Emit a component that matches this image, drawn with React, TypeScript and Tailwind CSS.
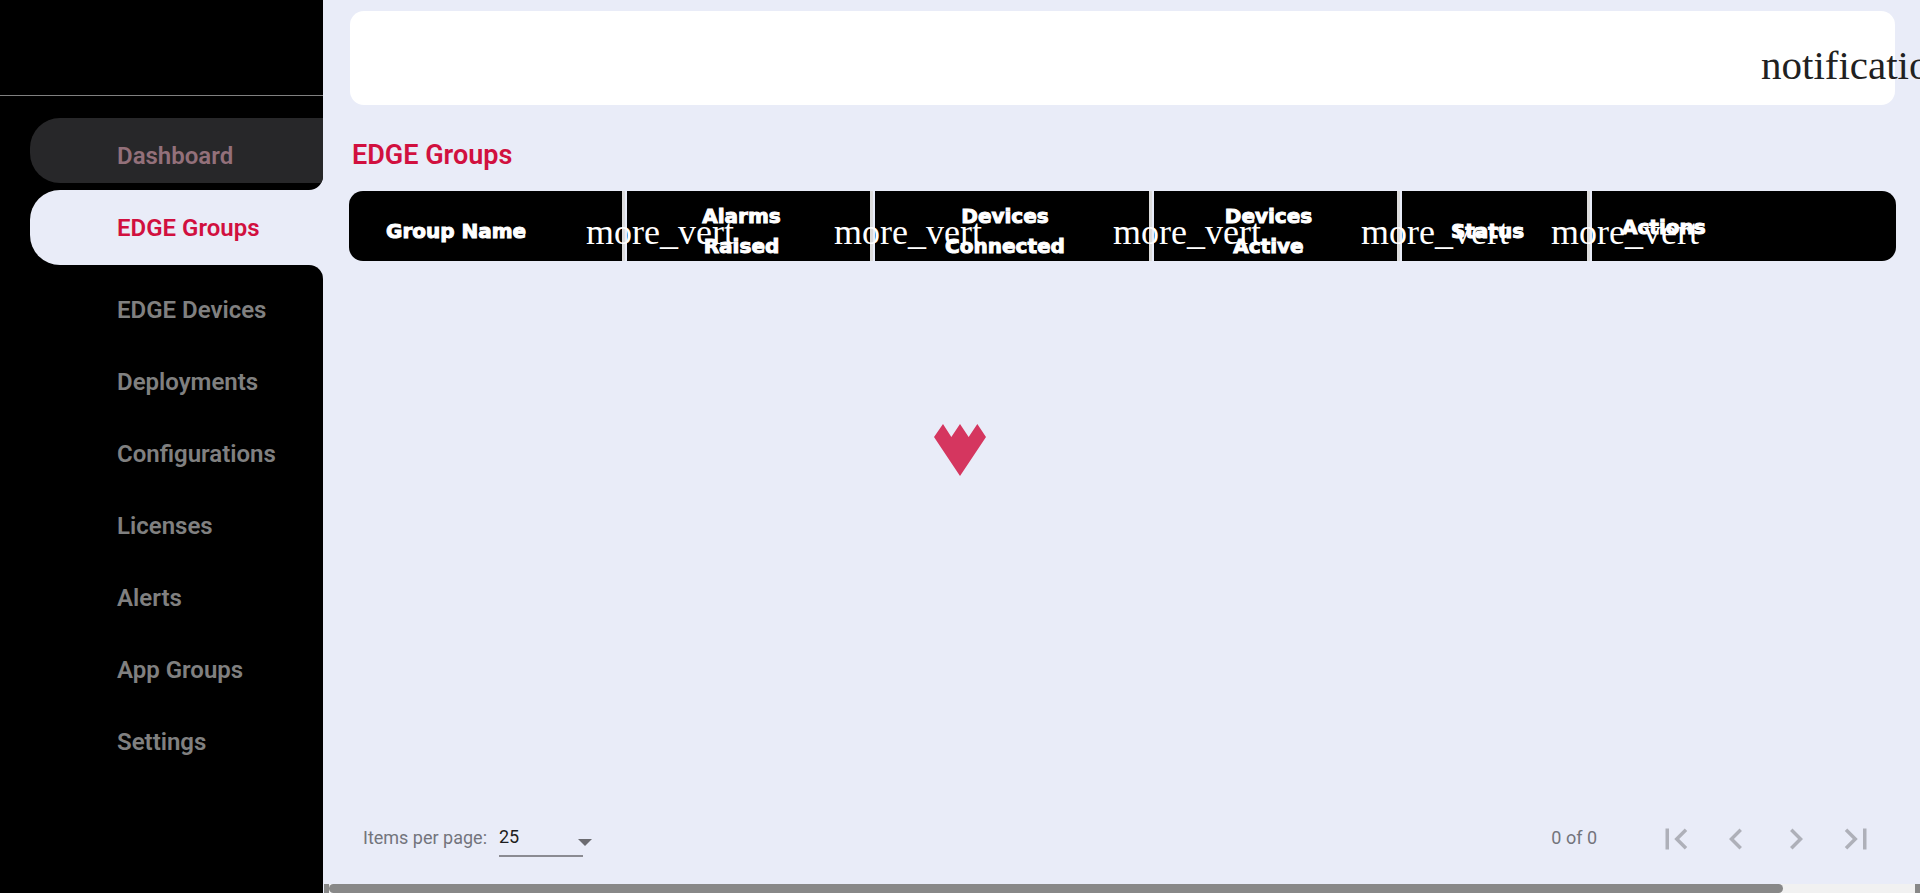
import React from 'react';
import { MdChevronLeft, MdChevronRight, MdFirstPage, MdLastPage } from 'react-icons/md';

const before = ['Dashboard'];
const after = ['EDGE Devices', 'Deployments', 'Configurations', 'Licenses', 'Alerts', 'App Groups', 'Settings'];

function Sidebar() {
  return (
    <aside className="flex w-[323px] shrink-0 flex-col bg-black font-[Roboto,sans-serif] text-2xl font-semibold text-[#808080]">
      <div className="h-24 border-b border-[#808080]" />
      <nav className="mt-[22px] flex flex-col">
        {before.map((label) => (
          <div key={label} className="bg-[#e9ecf8]">
            <div className="overflow-hidden rounded-br-[14px] bg-black pb-[7px]">
              <a href="#" className="ml-[30px] flex h-[65px] items-center rounded-l-[30px] bg-[#272729] pt-[10px] pl-[87px] text-[#93707a]">
                {label}
              </a>
            </div>
          </div>
        ))}
        <div className="bg-black">
          <a href="#" aria-current="page" className="ml-[30px] flex h-[75px] items-center rounded-l-[30px] bg-[#e9ecf8] pl-[87px] text-[#d1103f]">
            EDGE Groups
          </a>
        </div>
        <div className="bg-[#e9ecf8]">
          <div className="flex flex-col rounded-tr-[14px] bg-black pt-[9px]">
            {after.map((label) => (
              <a key={label} href="#" className="flex h-[72px] items-center pl-[117px]">
                {label}
              </a>
            ))}
          </div>
        </div>
      </nav>
    </aside>
  );
}

function HeaderCell({ first, children }: { first?: boolean; children: React.ReactNode }) {
  return (
    <th className={first ? 'rounded-l-[14px] border-r-[3px] border-[#dcdcdc] bg-black p-0' : 'border-r-[3px] border-[#dcdcdc] bg-black p-0'}>
      <div className={first ? 'relative flex h-[70px] items-center pt-[10px] pl-[37px]' : 'relative flex h-[70px] items-center justify-center pt-[10px] pr-[14px]'}>
        <span className="[-webkit-text-stroke:1px_white]">{children}</span>
        <button type="button" className="absolute top-4 right-0 w-9 text-left font-['Liberation_Serif',serif] text-4xl leading-[50px] font-normal whitespace-nowrap text-white">
          more_vert
        </button>
      </div>
    </th>
  );
}

function GroupsTable() {
  return (
    <div className="-mx-[2px]">
      <table className="w-full table-fixed border-separate border-spacing-x-[2px] border-spacing-y-0 font-['DejaVu_Sans',sans-serif] text-xl leading-[30px] font-bold text-white">
        <colgroup>
          <col className="w-[276px]" />
          <col className="w-[246px]" />
          <col className="w-[277px]" />
          <col className="w-[246px]" />
          <col className="w-[188px]" />
          <col />
        </colgroup>
        <thead>
          <tr>
            <HeaderCell first>Group Name</HeaderCell>
            <HeaderCell>Alarms<br />Raised</HeaderCell>
            <HeaderCell>Devices<br />Connected</HeaderCell>
            <HeaderCell>Devices<br />Active</HeaderCell>
            <HeaderCell>Status</HeaderCell>
            <th className="rounded-r-[14px] bg-black pt-[2px] pb-0 pl-[30px] text-left [-webkit-text-stroke:1px_white]">Actions</th>
          </tr>
        </thead>
      </table>
    </div>
  );
}

const pageButton = 'flex h-[60px] w-[60px] items-center justify-center';

function Paginator() {
  return (
    <div className="flex h-[60px] items-center justify-between pr-[10px] pl-[14px] font-[Roboto,sans-serif] text-lg font-normal text-[#73747c]">
      <div className="flex items-center gap-3 pb-[2px]">
        <label htmlFor="page-size">Items per page:</label>
        <div className="relative h-[38px] w-[84px] border-b-2 border-[#8b8b92]">
          <select id="page-size" defaultValue="25" className="h-9 w-full appearance-none bg-transparent text-[#1d1d20]">
            <option>25</option>
            <option>50</option>
            <option>100</option>
          </select>
          <svg viewBox="0 0 14 7" className="pointer-events-none absolute top-5 -right-[9px] h-[7px] w-[14px] fill-[#6b6b70]">
            <path d="M0 0h14L7 7z" />
          </svg>
        </div>
      </div>
      <div className="flex items-center">
        <span className="mr-[49px] pb-[2px]">0 of 0</span>
        <div className="flex text-[42px] text-[#aeb0b9]">
          <button type="button" aria-label="First page" className={pageButton}><MdFirstPage /></button>
          <button type="button" aria-label="Previous page" className={pageButton}><MdChevronLeft /></button>
          <button type="button" aria-label="Next page" className={pageButton}><MdChevronRight /></button>
          <button type="button" aria-label="Last page" className={pageButton}><MdLastPage /></button>
        </div>
      </div>
    </div>
  );
}

export default function App() {
  return (
    <div className="relative flex min-h-screen overflow-hidden bg-[#e9ecf8]">
      <Sidebar />
      <div className="flex min-w-0 flex-1 flex-col">
        <main className="flex flex-1 flex-col pt-[11px] pr-6 pl-[26px]">
          <header className="mx-px flex h-[94px] items-center justify-end rounded-[14px] bg-white pr-[94px]">
            <button type="button" className="mt-[14px] w-10 text-left font-['Liberation_Serif',serif] text-[41px] leading-[60px] whitespace-nowrap text-[#212121]">
              notifications
            </button>
          </header>
          <h1 className="mt-8 mb-[18px] pl-[3px] font-[Roboto,sans-serif] text-[27px] leading-[36px] font-semibold text-[#d1103f]">EDGE Groups</h1>
          <div className="flex-1">
            <GroupsTable />
          </div>
          <Paginator />
          <div className="h-[15px]" />
        </main>
        <div className="ml-px flex h-[9px] justify-between bg-[#f1f1f1]">
          <div className="w-[5px] bg-[#888]" />
          <div className="flex-1">
            <div className="h-full w-11/12 rounded-full bg-[#888]" />
          </div>
          <div className="w-[5px] bg-[#888]" />
        </div>
      </div>
      <div role="status" aria-label="Loading" className="pointer-events-none absolute inset-0 flex items-center justify-center">
        <svg viewBox="0 0 156 156" className="mt-[7px] h-[52px] w-[52px] fill-[#d5365f]">
          <path d="M0 39L27 0L52 39L78 0L104 39L130 0L156 39L78 156Z" />
        </svg>
      </div>
    </div>
  );
}
